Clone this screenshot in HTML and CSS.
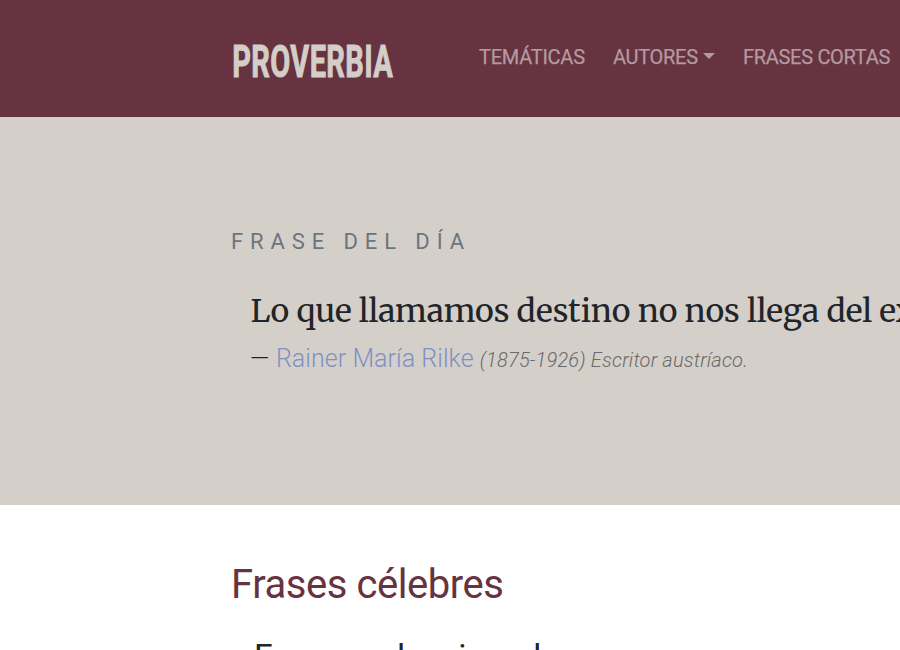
FILE: index.html
```html
<!DOCTYPE html>
<html lang="es">
<head>
<meta charset="utf-8">
<title>Proverbia</title>
<link rel="stylesheet" href="styles.css">
</head>
<body>
<header class="navbar">
  <a class="brand">
    <svg class="logo" width="166" height="44" viewBox="0 0 166 44"><text class="logo-text" x="0" y="35.5" textLength="249" lengthAdjust="spacing" transform="translate(1.2 0) scale(.645 1)">PROVERBIA</text></svg>
  </a>
  <nav class="nav">
    <a class="t1">TEMÁTICAS</a>
    <a class="t2">AUTORES<i class="caret"></i></a>
    <a class="t3">FRASES CORTAS</a>
  </nav>
</header>
<section class="hero">
  <h2 class="eyebrow">FRASE DEL DÍA</h2>
  <blockquote class="quote">
    <p class="quote-text">Lo que llamamos destino no nos llega del exterior</p>
    <footer class="quote-by"><span class="dash">—</span> <a class="author">Rainer María Rilke</a> <em class="bio">(1875-1926) Escritor austríaco.</em></footer>
  </blockquote>
</section>
<main class="content">
  <h1 class="title">Frases célebres</h1>
  <p class="phrase">Frases seleccionadas</p>
</main>
</body>
</html>
```
FILE: styles.css
```css
* { box-sizing: border-box; }
html, body { height: 650px; overflow: hidden; }
body { display: flex; flex-direction: column; margin: 0; font-family: Roboto, sans-serif; color: #212529; background: #fff; }
.navbar { flex: none; display: flex; height: 117px; padding-left: 231px; background: #673340; white-space: nowrap; overflow: hidden; }
.brand { width: 248px; padding-top: 41px; flex: none; }
.logo { display: block; }
.logo-text { font: 700 45px Roboto, sans-serif; fill: #d4cec9; stroke: #d4cec9; stroke-width: 1; }
.nav { display: flex; padding-top: 42px; font-size: 20px; line-height: 30px; color: #b39aa0; -webkit-text-stroke: .25px #b39aa0; }
.t1 { width: 134px; letter-spacing: -.25px; }
.t2 { width: 130px; letter-spacing: -.3px; }
.t3 { letter-spacing: -.3px; }
.caret { display: inline-block; margin-left: 5px; vertical-align: 5px; border: 6px solid transparent; border-top-color: currentColor; border-bottom: 0; }
.hero { flex: none; height: 388px; padding: 110px 0 0 231px; background: #d4cfc9; white-space: nowrap; overflow: hidden; }
.eyebrow { margin: 0; font-size: 22px; font-weight: 400; line-height: 30px; letter-spacing: 6.9px; color: #6c757d; }
.quote { margin: 28px 0 0 19px; }
.quote-text { margin: 0 0 0 .6px; font: 32px/52px Merriweather, serif; letter-spacing: -.19px; color: #212529; }
.quote-by { margin-top: 3px; font-size: 25px; font-weight: 300; line-height: 38px; }
.dash { margin-right: .5px; }
.author { color: #7f91c4; letter-spacing: .06px; }
.bio { font-size: 20px; letter-spacing: .17px; color: #6a6a69; }
.content { flex: 1; min-height: 0; padding: 56px 0 0 231px; white-space: nowrap; overflow: hidden; }
.title { margin: 0; font-size: 40px; line-height: 48px; font-weight: 400; letter-spacing: -.45px; color: #673340; }
.phrase { margin: 24px 0 0 23px; font-size: 33.6px; line-height: 48px; }
```
